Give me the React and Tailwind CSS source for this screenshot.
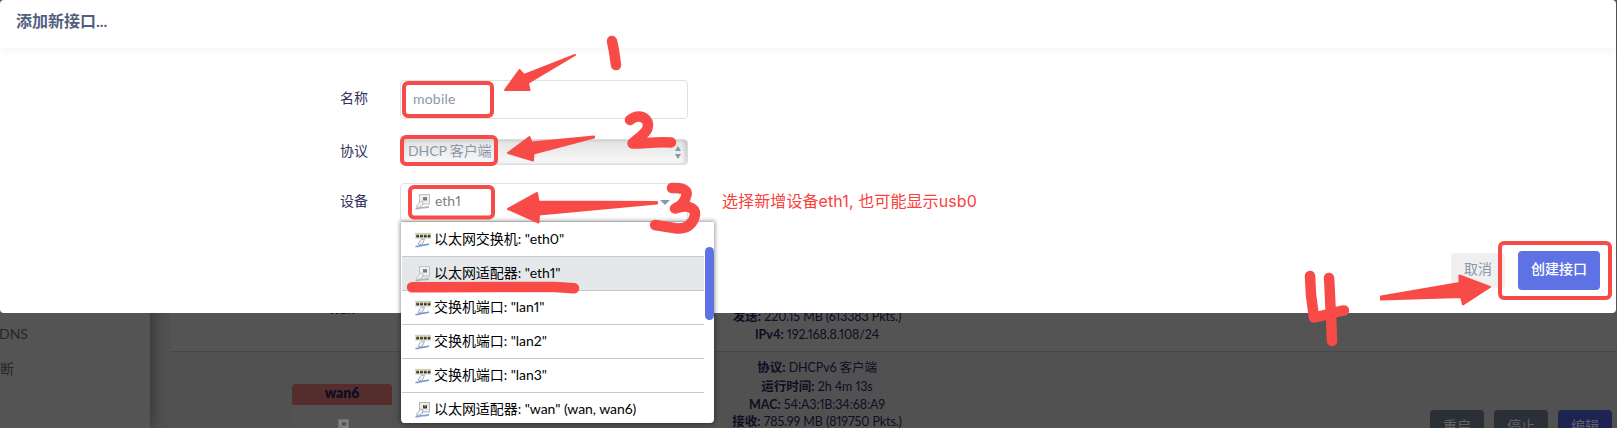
import React from "react";

function AdapterIcon({ muted = false }) {
  return (
    <svg width="16" height="16" viewBox="0 0 16 16" className="shrink-0">
      <rect x="4.5" y="0.5" width="10" height="9.5" fill={muted ? "#efefef" : "#ececec"} stroke={muted ? "#c2c2c2" : "#b4b4b4"} />
      <rect x="8" y="3.200" width="4" height="3.300" fill={muted ? "#777777" : "#3c3c34"} />
      <rect x="9" y="3.200" width="2" height="1.200" fill={muted ? "#8c8c8c" : "#b3a82e"} />
      <path d="M1.500 12 4.500 8.500 6 7l2 1-.5 3-3 2-2.500.5z" fill="#f4f4f4" stroke={muted ? "#b0b0b0" : "#9ca0a8"} strokeWidth="0.8" />
      <path d="M0.500 14.600c2.500.6 4-.8 6.500-.9s4 .1 7-1" fill="none" stroke={muted ? "#b2b2b2" : "#7da3d6"} strokeWidth="1.800" />
    </svg>
  );
}

function SwitchIcon() {
  return (
    <svg width="16" height="16" viewBox="0 0 16 16" className="shrink-0">
      <rect x="0" y="1" width="16" height="6" fill="#e2e2de" />
      <path d="M0 1.300h16" stroke="#b4b4b0" strokeWidth="0.6" />
      {[1.3, 5.1, 8.9, 12.7].map((x) => (
        <g key={x}>
          <rect x={x} y="2.800" width="2.700" height="2.600" fill="#2e2e24" />
          <rect x={x + 0.6} y="2.200" width="1.500" height="1.200" fill="#c5b83c" />
        </g>
      ))}
      <path d="M3 12.500 5 8.500 6.500 7.300h3L8 11l-3 2z" fill="#f2f2f2" stroke="#9a9ea6" strokeWidth="0.8" />
      <path d="M0.500 14.400c2.500.6 4-.9 6.500-1.100s4 0 7-1.300" fill="none" stroke="#7099d3" strokeWidth="1.700" />
    </svg>
  );
}

const options = [
  { label: '以太网交换机: "eth0"', icon: "switch" },
  { label: '以太网适配器: "eth1"', icon: "muted", selected: true },
  { label: '交换机端口: "lan1"', icon: "switch" },
  { label: '交换机端口: "lan2"', icon: "switch" },
  { label: '交换机端口: "lan3"', icon: "switch" },
  { label: '以太网适配器: "wan" (wan, wan6)', icon: "adapter" },
];

function DeviceMenu() {
  return (
    <div className="absolute left-0 top-[38px] z-10 flex h-[201px] w-[313px] overflow-hidden rounded-b bg-white pl-px shadow-[0_0_4px_1px_rgba(0,0,0,0.4)]">
      <ul className="w-[302px] pt-px text-black">
        {options.map((o) => (
          <li
            key={o.label}
            className={
              "flex h-[34px] items-center gap-[3px] whitespace-nowrap border-b border-[#c8c8c8] pl-[13px] last:border-b-0 " +
              (o.selected ? "bg-[#e4e8eb]" : "bg-white")
            }
          >
            {o.icon === "switch" ? <SwitchIcon /> : <AdapterIcon muted={o.icon === "muted"} />}
            <span className="pb-[2px] tracking-[-0.05px]">{o.label}</span>
          </li>
        ))}
      </ul>
      <div className="ml-px mt-[25px] h-[73px] w-[9px] rounded-full bg-[#5e72e4]" />
    </div>
  );
}

function Field({ label, children }) {
  return (
    <div className="flex items-center">
      <label className="w-[60px] pb-[3px] text-[#32325d]">{label}</label>
      {children}
    </div>
  );
}

function Dialog() {
  return (
    <section className="absolute left-0 top-0 flex h-[313px] w-[1616px] flex-col rounded bg-white">
      <header className="h-12 rounded-t px-4 pt-[9px] text-base font-bold leading-6 text-[#525f7f] shadow-[0_2px_10px_rgba(0,0,0,0.05)]">
        添加新接口...
      </header>
      <div className="flex flex-col pl-[340px] pt-8">
        <Field label="名称">
          <div className="flex h-[39px] w-72 items-center rounded border border-[#dee2e6] px-3 pb-[2px] tracking-[0.2px] text-[#8898aa]">mobile</div>
        </Field>
        <div className="h-5" />
        <Field label="协议">
          <div className="flex h-[26px] w-72 items-center justify-between rounded border border-[#d9dde1] bg-linear-to-b from-[#e2e2e2] to-[#fafafa] pl-[7px] pr-[6px] text-[#8898aa] shadow-[inset_-3px_0_4px_-1px_rgba(0,0,0,0.16),inset_3px_0_4px_-1px_rgba(0,0,0,0.1)]">
            <span className="pb-[3px] tracking-[-0.1px]">DHCP 客户端</span>
            <svg width="6" height="13" viewBox="0 0 6 13" fill="#8898aa">
              <path d="M3 0l3 5H0zM0 8h6l-3 5z" />
            </svg>
          </div>
        </Field>
        <div className="h-[18px]" />
        <Field label="设备">
          <div className="relative flex h-[39px] w-72 items-center rounded border border-[#dee2e6] pl-[14px] pr-[17px] text-[#808080]">
            <span className="pb-px">
              <AdapterIcon muted />
            </span>
            <span className="ml-1 flex-1 pb-[3px]">eth1</span>
            <svg width="10" height="5" viewBox="0 0 10 5" fill="#8898aa">
              <path d="M0 0h10L5 5z" />
            </svg>
            <DeviceMenu />
            <p className="absolute left-[321px] top-[5px] whitespace-nowrap font-['Inter','Noto_Sans_CJK_SC',sans-serif] text-base leading-6 tracking-[0.1px] text-[#fa413b]">
              选择新增设备eth1, 也可能显示usb0
            </p>
          </div>
        </Field>
      </div>
      <footer className="flex items-center justify-end gap-[13px] pr-4 pt-[29px]">
        <button className="h-[35px] w-[54px] rounded bg-[#f0f0f0] pb-[3px] text-[#8898aa]">取消</button>
        <button className="h-[39px] w-[82px] rounded bg-[#5e72e4] pb-[3px] font-medium text-white">创建接口</button>
      </footer>
    </section>
  );
}

function Stat({ name, value, className = "" }) {
  return (
    <p className={className}>
      <b>{name}:</b> <span className="tracking-[-0.1px]">{value}</span>
    </p>
  );
}

function InterfacesPage() {
  return (
    <div className="flex h-full text-[#0e0e22]">
      <aside className="z-0 w-[150px] shrink-0 bg-[#545454] pt-[324px] text-[#252729] shadow-[0_0_16px_rgba(0,0,0,0.45)]">
        <p className="-ml-px h-[35px] leading-5">DNS</p>
        <p className="h-[34px] leading-5">断</p>
      </aside>
      <main className="ml-5 flex-1 bg-[#515151]">
        <div className="flex h-[352px] items-end border-b border-[#464646] bg-[#545454]">
          <div className="mb-[32px] ml-[122px] w-[100px] text-center font-bold leading-5">wan</div>
          <div className="mb-[7px] ml-[225px] w-[400px] text-center text-[12.5px] leading-[18px]">
            <Stat name="发送" value="220.15 MB (613383 Pkts.)" />
            <Stat name="IPv4" value="192.168.8.108/24" />
          </div>
        </div>
        <div className="flex h-[76px] items-start">
          <div className="ml-[122px] mt-8 h-[44px] w-[100px] overflow-hidden rounded-t bg-[#535353]">
            <div className="flex h-[21px] items-center justify-center bg-[#552d2d] pb-[3px] font-extrabold">wan6</div>
            <div className="flex justify-center pt-[14px] opacity-30">
              <AdapterIcon />
            </div>
          </div>
          <div className="ml-[225px] mt-[7px] w-[400px] text-center text-[12.5px] leading-[18px]">
            <Stat name="协议" value="DHCPv6 客户端" />
            <Stat name="运行时间" value="2h 4m 13s" className="pt-px" />
            <Stat name="MAC" value="54:A3:1B:34:68:A9" />
            <Stat name="接收" value="785.99 MB (819750 Pkts.)" className="-mt-px" />
          </div>
          <div className="ml-auto mr-[5px] mt-[58px] flex h-[18px] gap-[10px] text-[#626466]">
            <button className="h-[33px] w-[54px] shrink-0 rounded bg-[#2a3036] pb-px">重启</button>
            <button className="h-[33px] w-[54px] shrink-0 rounded bg-[#2a3036] pb-px">停止</button>
            <button className="h-[33px] w-[54px] shrink-0 rounded bg-[#1e2452] pb-px">编辑</button>
          </div>
        </div>
      </main>
    </div>
  );
}

function Markup() {
  return (
    <svg className="pointer-events-none absolute left-0 top-0 z-20" width="1617" height="428" viewBox="0 0 1617 428">
      <g fill="none" stroke="#f84b47" strokeWidth="4">
        <rect x="404" y="83" width="88" height="33" rx="4" />
        <rect x="402" y="137" width="94" height="27" rx="4" />
        <rect x="410" y="187" width="83" height="30.500" rx="4" />
        <rect x="1500" y="243" width="110" height="55" rx="4" />
      </g>
      <g fill="#f84b47" stroke="#f84b47" strokeWidth="2" strokeLinejoin="round">
        <path d="M505 90 519.500 70 524 75 575 55 528 83 529.500 90z" />
        <path d="M508 153 529.500 137 531.500 142.500 594 136.500V137.500L533.500 153.500 533 160.500z" />
        <path d="M508 209 537 193 538.500 201.500 657 202V203.500L539 214.500 538.500 222.500z" />
        <path d="M1381 296.500 1459.500 283V275.500L1490 287 1463 304.500 1461 297 1381 299.500z" />
      </g>
      <g fill="none" stroke="#f84b47" strokeWidth="10.5" strokeLinecap="round" strokeLinejoin="round">
        <path d="M612 41 614 51 616 65" />
        <path d="M630 120C636 115 644 115 647.500 122C650 131 643 134 632.500 143.500C642 144 657 141 671 142.500" />
        <path d="M672 188C680 187.500 688 189 686.500 195C685 202 681 206 675 208.500C685 205 696 206 695 215C693 225 686 229 677 228.500L655 225" />
        <path d="M1310 276 1311 295 1314 317.500C1323 316 1334 312 1344 310.500M1329 278C1330 290 1330 302 1331 315L1332 341" />
        <path d="M412 287.300 496 287 555 287 574 288.300" />
      </g>
    </svg>
  );
}

export default function App() {
  return (
    <div className="relative h-[428px] w-[1617px] overflow-hidden bg-[#515151] font-['Lato','Noto_Sans_CJK_SC',sans-serif] text-sm proportional-nums">
      <InterfacesPage />
      <Dialog />
      <Markup />
    </div>
  );
}
